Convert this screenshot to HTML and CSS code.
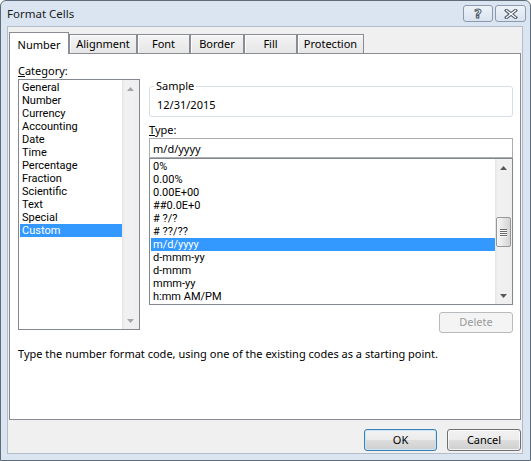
FILE: index.html
```html
<!DOCTYPE html>
<html>
<head>
<meta charset="utf-8">
<title>Format Cells</title>
<link rel="stylesheet" href="styles.css">
</head>
<body>
<div class="window">
  <div class="titlebar">
    <span class="title">Format Cells</span>
    <div class="caption-buttons">
      <div class="cap-btn help"><span class="help-glyph">?</span></div>
      <div class="cap-btn close">
        <svg width="14" height="10" viewBox="0 0 14 10">
          <path d="M2.5 1.5 L11.5 8.5 M11.5 1.5 L2.5 8.5" stroke="#4a5566" stroke-width="3.4" stroke-linecap="square" fill="none"/>
          <path d="M2.5 1.5 L11.5 8.5 M11.5 1.5 L2.5 8.5" stroke="#ffffff" stroke-width="1.3" stroke-linecap="square" fill="none"/>
        </svg>
      </div>
    </div>
  </div>
  <div class="client">
    <div class="tabs">
      <div class="tab active t-number">Number</div>
      <div class="tab t-align">Alignment</div>
      <div class="tab t-font">Font</div>
      <div class="tab t-border">Border</div>
      <div class="tab t-fill">Fill</div>
      <div class="tab t-prot">Protection</div>
    </div>
    <div class="pane">
      <div class="columns">
        <div class="label"><u>C</u>ategory:</div>
        <div class="listbox cat-list">
          <ul class="items">
            <li>General</li>
            <li>Number</li>
            <li>Currency</li>
            <li>Accounting</li>
            <li>Date</li>
            <li>Time</li>
            <li>Percentage</li>
            <li>Fraction</li>
            <li>Scientific</li>
            <li>Text</li>
            <li>Special</li>
            <li class="sel">Custom</li>
          </ul>
          <div class="scrollbar disabled">
            <div class="arrow up"><svg width="7" height="4" viewBox="0 0 7 4"><polygon points="0,4 3.5,0 7,4"/></svg></div>
            <div class="track"></div>
            <div class="arrow down"><svg width="7" height="4" viewBox="0 0 7 4"><polygon points="0,0 7,0 3.5,4"/></svg></div>
          </div>
        </div>
        <div class="right-col">
          <fieldset class="sample">
            <legend>Sample</legend>
            <div class="sample-value">12/31/2015</div>
          </fieldset>
          <div class="label type-label"><u>T</u>ype:</div>
          <div class="input">m/d/yyyy</div>
          <div class="listbox type-list">
            <ul class="items">
              <li>0%</li>
              <li>0.00%</li>
              <li>0.00E+00</li>
              <li>##0.0E+0</li>
              <li># ?/?</li>
              <li># ??/??</li>
              <li class="sel">m/d/yyyy</li>
              <li>d-mmm-yy</li>
              <li>d-mmm</li>
              <li>mmm-yy</li>
              <li>h:mm AM/PM</li>
            </ul>
            <div class="scrollbar">
              <div class="arrow up"><svg width="7" height="4" viewBox="0 0 7 4"><polygon points="0,4 3.5,0 7,4"/></svg></div>
              <div class="track">
                <div class="thumb"><span class="grip"></span><span class="grip"></span><span class="grip"></span><span class="grip"></span></div>
              </div>
              <div class="arrow down"><svg width="7" height="4" viewBox="0 0 7 4"><polygon points="0,0 7,0 3.5,4"/></svg></div>
            </div>
          </div>
          <div class="btn disabled delete">Delete</div>
        </div>
      </div>
      <p class="desc">Type the number format code, using one of the existing codes as a starting point.</p>
    </div>
    <div class="footer">
      <div class="btn default ok">OK</div>
      <div class="btn cancel">Cancel</div>
    </div>
  </div>
</div>
</body>
</html>
```

FILE: styles.css
```css
* { box-sizing: border-box; }
html, body { margin: 0; padding: 0; background: #ffffff; }
body {
  font-family: "Noto Sans", "Open Sans", sans-serif;
  font-size: 11px;
  color: #000000;
}
ul { list-style: none; margin: 0; padding: 0; }

.window {
  width: 531px;
  height: 461px;
  border: 1px solid #5f6b79;
  border-radius: 6px 6px 0 0;
  background: #dbe5f1;
  display: flex;
  flex-direction: column;
  padding: 0 7px 6px 6px;
}

.titlebar {
  height: 25px;
  display: flex;
  align-items: flex-start;
}
.title {
  font-size: 11.5px;
  line-height: 25px;
  color: #1b1b1b;
}
.caption-buttons {
  margin-left: auto;
  margin-right: -3px;
  padding-top: 4px;
  display: flex;
  gap: 2px;
}
.cap-btn {
  height: 17px;
  border: 1px solid #8c99ad;
  border-radius: 3px;
  background: linear-gradient(#eef3f9, #d9e3ef);
  display: flex;
  align-items: center;
  justify-content: center;
}
.cap-btn.help { width: 30px; }
.cap-btn.close { width: 31px; }
.help-glyph {
  font-family: "DejaVu Sans", sans-serif;
  font-weight: bold;
  font-size: 13px;
  line-height: 13px;
  color: #ffffff;
  -webkit-text-stroke: 1px #4a5566;
}

.client {
  flex: 1;
  border: 1px solid #b3bdca;
  background: #f0f0f0;
  padding: 5px 0 0 1px;
  display: flex;
  flex-direction: column;
}

.tabs {
  display: flex;
  align-items: flex-end;
  height: 21px;
  position: relative;
  z-index: 1;
}
.tab {
  height: 19px;
  border: 1px solid #898c95;
  border-bottom: none;
  background: linear-gradient(#f4f4f4, #e6e6e6);
  box-shadow: inset 1px 1px 0 #fdfdfd;
  text-align: center;
  padding-top: 1px;
  line-height: 15px;
}
.tab.active {
  height: 22px;
  margin-bottom: -1px;
  background: #ffffff;
  box-shadow: none;
  padding-top: 4px;
}
.t-number { width: 60px; }
.t-align { width: 68px; }
.t-font { width: 53px; }
.t-border { width: 54px; }
.t-fill { width: 53px; }
.t-prot { width: 67px; }

.pane {
  width: 512px;
  height: 367px;
  border: 1px solid #898c95;
  background: #ffffff;
  padding: 9px 7px 0 8px;
}

.columns {
  display: grid;
  grid-template-columns: 122px 364px;
  grid-template-rows: 15px auto;
  column-gap: 9px;
  row-gap: 1px;
}
.label {
  line-height: 15px;
  height: 15px;
  white-space: nowrap;
}
.columns > .label { grid-column: 1; grid-row: 1; }
.cat-list { grid-column: 1; grid-row: 2; }
.right-col { grid-column: 2; grid-row: 2; display: flex; flex-direction: column; }

.listbox {
  border: 1px solid #828790;
  display: flex;
  background: #ffffff;
}
.cat-list { height: 251px; }
.listbox .items {
  flex: 1;
  padding-top: 1px;
  min-width: 0;
}
.items li {
  height: 13px;
  padding-top: 1px;
  line-height: 12px;
  margin-left: 1px;
  padding-left: 2px;
  white-space: nowrap;
  font-family: "Roboto", "Noto Sans", sans-serif;
  font-size: 11px;
}
.items li.sel {
  background: #3399ff;
  color: #ffffff;
}

.scrollbar {
  width: 17px;
  display: flex;
  flex-direction: column;
  background: linear-gradient(to right, #e6e6e6, #f1f1f1 3px, #efefef);
}
.scrollbar .arrow {
  height: 17px;
  display: flex;
  align-items: center;
  justify-content: center;
}
.scrollbar .arrow svg { fill: #585858; }
.scrollbar.disabled .arrow svg { fill: #a6a6a6; }
.scrollbar .track { flex: 1; }
.thumb {
  margin: 41px 0 0 1px;
  width: 15px;
  height: 30px;
  border: 1px solid #979797;
  border-radius: 2px;
  background: linear-gradient(to right, #f6f6f6, #e6e6e6 50%, #d4d4d4);
  display: flex;
  flex-direction: column;
  align-items: center;
  justify-content: center;
  gap: 1px;
}
.grip {
  width: 7px;
  height: 1px;
  background: #6a6a6a;
  box-shadow: 0 1px 0 #f8f8f8;
}

.sample {
  margin: 0;
  padding: 5px 4px 4px 4px;
  border: 1px solid #d5dfe5;
  border-radius: 3px;
  min-width: 0;
}
.sample legend {
  padding: 0 2px;
  line-height: 14px;
}
.sample-value {
  line-height: 14px;
  padding-left: 3px;
}
.type-label { margin-top: 5px; }
.input {
  margin-top: 1px;
  height: 20px;
  border: 1px solid #abadb3;
  padding: 1px 3px 0 3px;
  line-height: 17px;
  background: #ffffff;
}
.type-list { height: 147px; }

.btn {
  height: 22px;
  border: 1px solid #707070;
  border-radius: 3px;
  background: linear-gradient(#f2f2f2, #ebebeb 50%, #dddddd 51%, #cfcfcf);
  box-shadow: inset 0 0 0 1px rgba(255,255,255,0.7);
  text-align: center;
  line-height: 19px;
}
.btn.delete {
  margin-top: 7px;
  align-self: flex-end;
  width: 74px;
  height: 21px;
  line-height: 18px;
  border-color: #b8bcbf;
  background: #f4f4f4;
  box-shadow: none;
  color: #9b9b9b;
}
.btn.default {
  border-color: #3c7fb1;
  box-shadow: inset 0 0 0 1px #c8e6f9;
}

.desc {
  margin: 13px 0 0 0;
  line-height: 15px;
}

.footer {
  margin-top: 9px;
  display: flex;
  justify-content: flex-end;
  gap: 10px;
  padding-right: 1px;
}
.ok { width: 73px; }
.cancel { width: 74px; }
```
